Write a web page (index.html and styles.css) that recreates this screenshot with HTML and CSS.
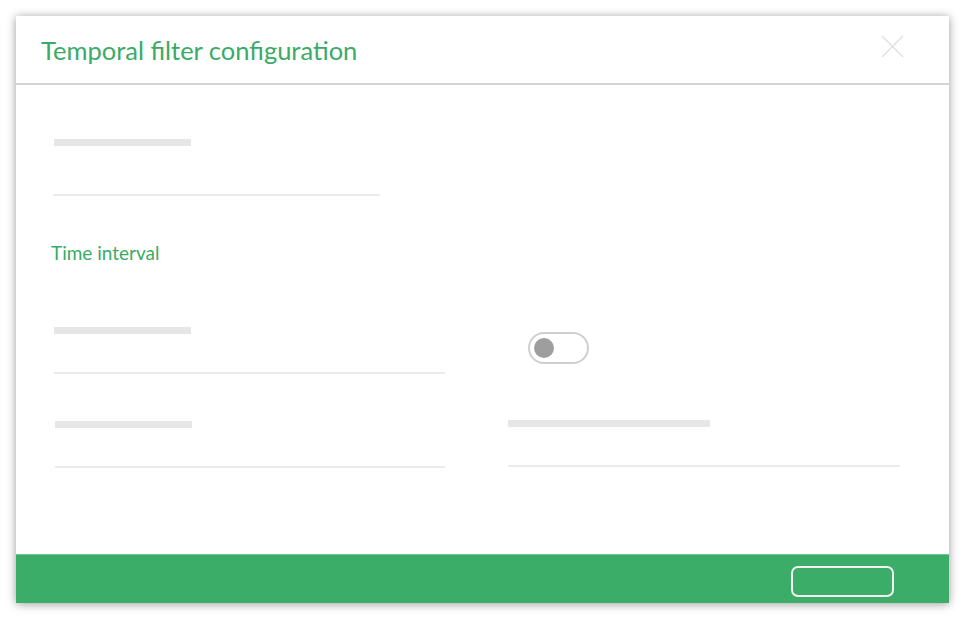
FILE: index.html
```html
<!DOCTYPE html>
<html lang="en">
<head>
    <meta charset="UTF-8">
    <meta name="viewport" content="width=device-width, initial-scale=1.0">
    <title>Temporal filter configuration</title>
    <link rel="stylesheet" href="styles.css">
</head>
<body>
    <!-- Dialog -->
    <div class="dialog">
        <div class="dialog-header">
            <h1>Temporal filter configuration</h1>
            <button class="close-btn" type="button" aria-label="Close">
                <svg width="23" height="23" viewBox="0 0 23 23">
                    <path d="M1 1 L22 22 M22 1 L1 22" stroke="#e2e2e2" stroke-width="1.6" fill="none"/>
                </svg>
            </button>
        </div>

        <div class="dialog-body">
            <div class="field field-name">
                <div class="field-label"></div>
                <div class="field-line"></div>
            </div>

            <h2 class="section-title">Time interval</h2>

            <div class="interval-grid">
                <div class="field">
                    <div class="field-label"></div>
                    <div class="field-line"></div>
                </div>
                <div class="toggle-cell">
                    <span class="toggle"><span class="knob"></span></span>
                </div>
                <div class="field">
                    <div class="field-label"></div>
                    <div class="field-line"></div>
                </div>
                <div class="field">
                    <div class="field-label wide"></div>
                    <div class="field-line"></div>
                </div>
            </div>
        </div>

        <div class="dialog-footer">
            <button class="footer-btn" type="button"></button>
        </div>
    </div>
</body>
</html>
```

FILE: styles.css
```css
/* Reset */
* {
    margin: 0;
    padding: 0;
    box-sizing: border-box;
}

body {
    font-family: 'Lato', 'Open Sans', sans-serif;
    background-color: #ffffff;
    padding: 16px;
}

/* Dialog */
.dialog {
    width: 933px;
    height: 587px;
    background: #ffffff;
    box-shadow: 0 1px 9px rgba(0, 0, 0, 0.4);
    display: flex;
    flex-direction: column;
}

.dialog-header {
    height: 69px;
    display: flex;
    align-items: center;
    justify-content: space-between;
    padding: 0 45px 0 25px;
    border-bottom: 2px solid #d4d4d4;
}

.dialog-header h1 {
    font-size: 25.5px;
    font-weight: 400;
    color: #3aab66;
}

.close-btn {
    background: none;
    border: none;
    width: 23px;
    height: 23px;
    margin-top: -7px;
    cursor: pointer;
}

.close-btn svg {
    display: block;
}

/* Body */
.dialog-body {
    flex: 1;
    padding: 54px 48px 0 38px;
}

.field-label {
    width: 137px;
    height: 7px;
    background-color: #e6e6e6;
}

.field-label.wide {
    width: 202px;
}

.field-line {
    height: 2px;
    background-color: #ebebeb;
}

.field-name .field-label {
    margin-bottom: 48px;
}

.field-name .field-line {
    width: 327px;
    margin-left: -1px;
}

.section-title {
    font-size: 19px;
    font-weight: 400;
    color: #3aab66;
    margin: 47px 0 0 -3px;
    line-height: 20px;
}

.interval-grid {
    display: grid;
    grid-template-columns: 391px 392px;
    column-gap: 63px;
    row-gap: 47px;
    margin-top: 64px;
}

.interval-grid .field-label {
    margin-bottom: 38px;
}

.interval-grid .field:nth-child(3) {
    margin-left: 1px;
}

.interval-grid .field:nth-child(4) {
    margin-top: -1px;
}

.toggle-cell {
    padding: 5px 0 0 20px;
}

.toggle {
    display: block;
    width: 61px;
    height: 32px;
    border: 2px solid #cfcfcf;
    border-radius: 16px;
    position: relative;
}

.toggle .knob {
    position: absolute;
    top: 4px;
    left: 4px;
    width: 20px;
    height: 20px;
    border-radius: 50%;
    background-color: #9e9e9e;
}

/* Footer */
.dialog-footer {
    height: 49px;
    background-color: #3bad68;
    border-top: 1px solid #72c493;
    display: flex;
    justify-content: flex-end;
    align-items: flex-start;
    padding: 11px 55px 0 0;
}

.footer-btn {
    width: 103px;
    height: 31px;
    border: 2px solid #f2f2f2;
    border-radius: 7px;
    background: transparent;
    cursor: pointer;
}
```
